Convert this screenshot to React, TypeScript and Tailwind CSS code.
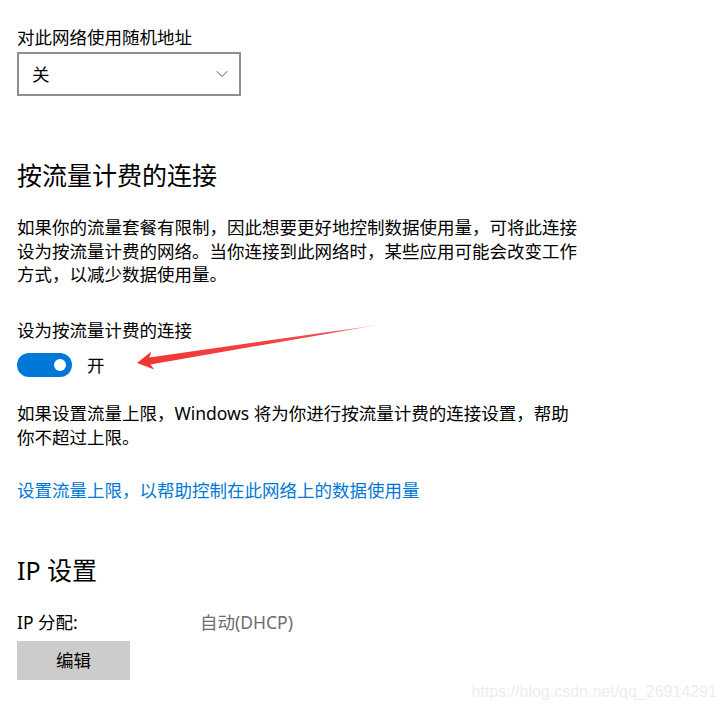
import { ChevronDown } from "lucide-react";

function Toggle({ on }: { on: boolean }) {
    return (
        <div className="flex items-center gap-[15px]">
            <div className={`flex h-[24px] w-[55px] items-center rounded-full ${on ? "justify-end bg-[#0078d7] pr-[6px]" : "justify-start border-2 border-black pl-[4px]"}`}>
                <div className={`h-[12px] w-[12px] rounded-full ${on ? "bg-white" : "bg-black"}`} />
            </div>
            <span className="text-[17.5px] leading-[24px]">{on ? "开" : "关"}</span>
        </div>
    );
}

function RedArrow() {
    return (
        <svg className="pointer-events-none absolute left-0 top-0" width={724} height={713} viewBox="0 0 724 713">
            <defs>
                <linearGradient id="arrowFade" x1="137" y1="363" x2="378" y2="325" gradientUnits="userSpaceOnUse">
                    <stop offset="0" stopColor="#f23535" />
                    <stop offset="0.8" stopColor="#f44848" />
                    <stop offset="1" stopColor="#ffc4c4" />
                </linearGradient>
            </defs>
            <polygon
                points="137,363 151.4,351.6 149.3,357.5 378,325 150.4,364.4 154.2,369.4"
                fill="url(#arrowFade)"
            />
        </svg>
    );
}

export default function App() {
    return (
        <div className="relative h-[713px] w-[724px] overflow-hidden bg-white font-['Noto_Sans','Noto_Sans_CJK_SC',sans-serif] text-black">
            <div className="flex flex-col items-start pl-[17px] pt-[25px]">
                <p className="text-[17.5px] leading-[24px]">对此网络使用随机地址</p>
                <div className="mt-[3px] flex h-[44px] w-[224px] items-center justify-between border-2 border-[#8f8f8f] pl-[13px] pr-[7px]">
                    <span className="text-[17.5px] leading-[24px]">关</span>
                    <ChevronDown className="h-[20px] w-[20px] text-[#333333]" strokeWidth={1} />
                </div>

                <h2 className="mt-[63px] text-[25px] leading-[32px] font-normal">按流量计费的连接</h2>
                <p className="mt-[25px] w-[572px] text-[17.5px] leading-[23.5px]">
                    如果你的流量套餐有限制，因此想要更好地控制数据使用量，可将此连接设为按流量计费的网络。当你连接到此网络时，某些应用可能会改变工作方式，以减少数据使用量。
                </p>

                <p className="mt-[31px] text-[17.5px] leading-[24px]">设为按流量计费的连接</p>
                <div className="mt-[11px]">
                    <Toggle on />
                </div>

                <p className="mt-[24px] w-[572px] text-[17.5px] leading-[24px]">
                    如果设置流量上限，Windows 将为你进行按流量计费的连接设置，帮助
                    <br />
                    你不超过上限。
                </p>

                <a className="mt-[29px] text-[17.5px] leading-[24px] text-[#0078d7]">
                    设置流量上限，以帮助控制在此网络上的数据使用量
                </a>

                <h2 className="mt-[52px] text-[25px] leading-[32px] font-normal">IP 设置</h2>
                <div className="mt-[24px] flex text-[17.5px] leading-[24px]">
                    <span className="w-[183px]">IP 分配:</span>
                    <span className="text-[#6e6e6e]">自动(DHCP)</span>
                </div>
                <button className="mt-[7px] h-[39px] w-[113px] bg-[#cccccc] text-[17.5px] leading-[24px]">编辑</button>
            </div>

            <RedArrow />

            <span className="absolute bottom-[11px] right-[7px] font-['Liberation_Sans',sans-serif] text-[16px] leading-[20px] text-[#ededed]">
                https://blog.csdn.net/qq_26914291
            </span>
        </div>
    );
}
